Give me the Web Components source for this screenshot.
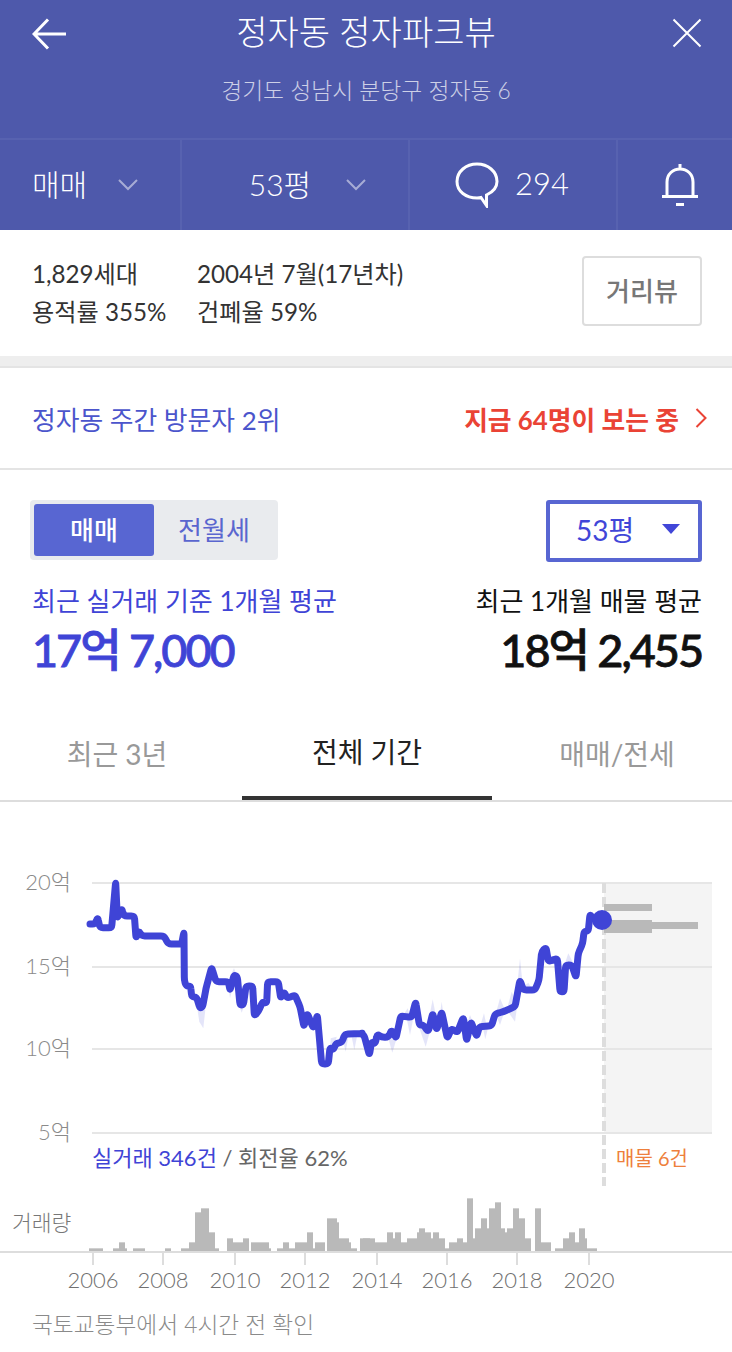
<!DOCTYPE html>
<html lang="ko">
<head>
<meta charset="utf-8">
<title>정자파크뷰</title>
<style>
html, body { margin: 0; background: #fff; }
body { width: 732px; font-family: Lato, "Noto Sans CJK KR", sans-serif; }
</style>
</head>
<body>
<apt-header></apt-header>
<apt-info></apt-info>
<apt-rank></apt-rank>
<apt-price></apt-price>
<apt-tabs></apt-tabs>
<apt-chart></apt-chart>

<script>
class AptHeader extends HTMLElement
{
    connectedCallback()
    {
        let root = this.attachShadow({mode: "open"});
        root.innerHTML =
        `<style>
        :host { display: block; height: 230px; background: #4e59ab; color: #fff; }
        .top { height: 138px; display: grid; grid-template-columns: 90px 1fr 90px; }
        .top svg { display: block; }
        .back { padding: 18px 0 0 32px; }
        .close { padding: 18px 0 0 30px; }
        .titles { text-align: center; }
        h1 { margin: 10px 0 0; font-size: 34px; line-height: 44px; font-weight: 300; white-space: nowrap; }
        p { margin: 20px 0 0; font-size: 22.800px; line-height: 32px; font-weight: 300; color: rgba(255,255,255,.72); white-space: nowrap; }
        .bar { border-top: 2px solid #5762b0; box-sizing: border-box; height: 92px; display: grid; grid-template-columns: 180px 228px 208px 1fr; }
        .cell { display: flex; align-items: center; justify-content: center; border-left: 2px solid #5762b0; font-size: 30px; font-weight: 300; padding-bottom: 4px; box-sizing: border-box; }
        .cell:first-child { border-left: 0; }
        .first { justify-content: flex-start; padding-left: 32px; }
        .chev { margin-left: 31px; margin-top: 4px; }
        .cnt { margin-left: 16px; font-size: 31px; }
        </style>
        <div class="top">
            <div class="back"><svg width="36" height="32" viewBox="0 0 36 32" fill="none" stroke="#fff" stroke-width="3"><path d="M34 16H2M16 1.500L2 16l14 14.500"/></svg></div>
            <div class="titles"><h1>정자동 정자파크뷰</h1><p>경기도 성남시 분당구 정자동 6</p></div>
            <div class="close"><svg width="30" height="30" viewBox="0 0 30 30" fill="none" stroke="#fff" stroke-width="2"><path d="M1.500 1.500L28.500 28.500M28.500 1.500L1.500 28.500"/></svg></div>
        </div>
        <div class="bar">
            <div class="cell first">매매<svg class="chev" width="20" height="12" viewBox="0 0 20 12" fill="none" stroke="#a7acd5" stroke-width="2"><path d="M1 1l9 9 9-9"/></svg></div>
            <div class="cell"><span style="margin-left:25px">53평</span><svg class="chev" style="margin-left:35px" width="20" height="12" viewBox="0 0 20 12" fill="none" stroke="#a7acd5" stroke-width="2"><path d="M1 1l9 9 9-9"/></svg></div>
            <div class="cell"><svg width="44" height="46" viewBox="0 0 44 46" fill="none" stroke="#fff" stroke-width="3" style="margin:4px 0 0 -2px"><path d="M22 2C11 2 2 9.500 2 19.500S11 36 22 36c1.500 0 2.500 0 4-.5l5.500 8V33C38 30 42 25.500 42 19.500 42 9.500 33 2 22 2z"/></svg><span class="cnt">294</span></div>
            <div class="cell"><svg width="36" height="42" viewBox="0 0 36 42" fill="none" stroke="#fff" stroke-width="3" style="margin:4px 0 0 10px"><path d="M18 0v4M5 31V18C5 10 11 5 18 5s13 5 13 13v13M0 32.500h36"/><path d="M14 40.500h8" stroke-width="3"/></svg></div>
        </div>`;
    }
}
customElements.define("apt-header", AptHeader);

class AptInfo extends HTMLElement
{
    connectedCallback()
    {
        let root = this.attachShadow({mode: "open"});
        root.innerHTML =
        `<style>
        :host { display: flex; align-items: center; height: 136px; padding: 0 30px 0 32px; box-sizing: border-box; border-bottom: 10px solid #eee; font-size: 24.200px; color: #333; line-height: 38px; }
        .col { white-space: nowrap; }
        .a { width: 165px; }
        button { margin-left: auto; width: 120px; height: 70px; margin-top: -4px; border: 2px solid #ddd; border-radius: 4px; background: #fff; font: inherit; font-size: 26px; font-weight: 500; color: #777; padding: 0; }
        </style>
        <div class="col a">1,829세대<br>용적률 355%</div>
        <div class="col">2004년 7월(17년차)<br>건폐율 59%</div>
        <button>거리뷰</button>`;
    }
}
customElements.define("apt-info", AptInfo);

class AptRank extends HTMLElement
{
    connectedCallback()
    {
        let root = this.attachShadow({mode: "open"});
        root.innerHTML =
        `<style>
        :host { display: flex; align-items: center; justify-content: space-between; height: 104px; padding: 0 25px 0 32px; box-sizing: border-box; border-top: 2px solid #e4e4e4; border-bottom: 2px solid #e4e4e4; font-size: 25.800px; }
        .rank { color: #4b55cc; }
        .now { display: flex; align-items: center; gap: 16px; color: #ea4335; font-weight: 700; }
        </style>
        <span class="rank">정자동 주간 방문자 2위</span>
        <span class="now">지금 64명이 보는 중<svg width="12" height="20" viewBox="0 0 12 20" fill="none" stroke="#ea4335" stroke-width="2"><path d="M1.500 1l9 9-9 9"/></svg></span>`;
    }
}
customElements.define("apt-rank", AptRank);

class AptPrice extends HTMLElement
{
    connectedCallback()
    {
        let root = this.attachShadow({mode: "open"});
        root.innerHTML =
        `<style>
        :host { display: block; padding: 30px 30px 0 30px; }
        .row { display: flex; justify-content: space-between; align-items: flex-start; }
        .seg { display: flex; width: 248px; height: 60px; padding: 4px; box-sizing: border-box; background: #e9ebee; border-radius: 4px; font-size: 26px; }
        .seg span { flex: 1; display: flex; align-items: center; justify-content: center; padding-bottom: 4px; box-sizing: border-box; color: #5a66cf; }
        .seg .on { flex: 0 0 120px; background: #5866d2; border-radius: 3px; color: #fff; font-weight: 500; }
        .pick { display: flex; align-items: center; justify-content: space-between; width: 156px; height: 62px; box-sizing: border-box; padding: 0 18px 5px 26px; border: 4px solid #5866d2; border-radius: 3px; font-size: 28px; color: #4146d8; }
        .pick i { width: 0; height: 0; border: 9px solid transparent; border-top: 10px solid #4146d8; border-bottom: 0; }
        .nums { margin-top: 20px; padding: 0 0 0 2px; }
        .lbl { font-size: 26px; line-height: 38px; }
        .val { font-size: 45px; line-height: 60px; font-weight: 500; letter-spacing: -2px; -webkit-text-stroke: .8px currentColor; margin-top: 0; }
        .blue { color: #3f44d6; }
        .right { text-align: right; color: #111; }
        </style>
        <div class="row">
            <div class="seg"><span class="on">매매</span><span>전월세</span></div>
            <div class="pick">53평<i></i></div>
        </div>
        <div class="row nums">
            <div class="blue"><div class="lbl">최근 실거래 기준 1개월 평균</div><div class="val">17억 7,000</div></div>
            <div class="right"><div class="lbl">최근 1개월 매물 평균</div><div class="val">18억 2,455</div></div>
        </div>`;
    }
}
customElements.define("apt-price", AptPrice);

class AptTabs extends HTMLElement
{
    connectedCallback()
    {
        let root = this.attachShadow({mode: "open"});
        root.innerHTML =
        `<style>
        :host { display: grid; grid-template-columns: 242px 250px 1fr; height: 122px; box-sizing: border-box; border-bottom: 2px solid #ddd; font-size: 28px; color: #999; text-align: center; }
        div { display: flex; align-items: center; justify-content: center; height: 120px; box-sizing: border-box; padding-top: 26px; }
        .a { padding-right: 8px; }
        .c { padding-left: 10px; }
        .on { color: #222; border-bottom: 4px solid #333; }
        </style>
        <div class="a">최근 3년</div><div class="on">전체 기간</div><div class="c">매매/전세</div>`;
    }
}
customElements.define("apt-tabs", AptTabs);

// zoom-read coordinates, x/3 + origin
const LINE_A = [[270,192],[285,192],[293,172],[300,203],[335,203],[347,65],[352,175],[365,145],[372,168],[403,168],[408,235],[417,212],[425,228],[492,228],[505,252],[545,252],[552,215],[553,360],[558,378],[572,378],[575,410],[590,412],[600,445],[608,440],[618,385],[635,322],[648,365],[685,365],[690,392],[702,345],[712,350],[720,435],[730,435],[738,378],[758,378],[763,468],[775,455],[788,425],[800,430],[803,365],[835,365],[842,415],[852,395],[862,415],[885,405],[900,440],[912,500],[922,460],[940,505],[952,465],[965,612],[985,612],[990,562],[1000,570],[1008,550],[1025,548],[1035,522],[1090,520]];
const LINE_B = [[0,520],[12,525],[28,585],[35,545],[45,552],[52,522],[65,532],[85,532],[95,510],[108,535],[122,468],[155,472],[167,425],[178,495],[190,495],[205,515],[218,460],[230,510],[245,455],[262,535],[275,505],[292,518],[310,472],[320,542],[333,485],[350,530],[358,500],[395,497],[405,462],[430,455],[465,440],[480,360],[490,390],[525,390],[537,360],[545,275],[558,262],[565,305],[592,295],[600,395],[612,395],[617,315],[635,315],[648,352],[655,280],[668,250],[672,215],[685,213],[690,162],[700,178],[725,180]];
// pale spikes of the monthly spread behind the line
const BAND_A = [[[592,445],[598,485],[610,505],[616,450]],[[625,360],[635,308],[645,350]],[[685,375],[690,415],[700,375]],[[695,340],[702,325],[710,345]],[[715,430],[725,458],[735,430]],[[990,575],[992,535],[1010,530],[1000,570]],[[1030,545],[1037,575],[1045,530]],[[1055,530],[1063,570],[1072,525]]];
const BAND_B = [[[85,535],[97,578],[110,535]],[[130,465],[143,445],[150,470]],[[140,475],[150,525],[160,475]],[[175,495],[197,560],[215,495]],[[208,470],[218,418],[228,470]],[[240,460],[245,425],[250,460]],[[325,480],[330,465],[340,490]],[[360,500],[372,460],[380,500]],[[368,500],[376,538],[385,500]],[[405,470],[420,415],[435,450]],[[410,470],[420,495],[430,465]],[[440,450],[465,485],[472,435],[455,395]],[[472,375],[480,295],[488,375]],[[490,380],[505,368],[515,385]],[[615,310],[625,280],[640,310]]];
const BARS_A = [[267,309,325],[339,357,325],[357,375,307],[375,381,325],[399,435,325],[495,513,325],[543,567,325],[567,585,307],[585,603,217],[603,627,205],[627,645,277],[645,657,325],[681,699,295],[699,729,307],[729,747,295],[753,807,307],[807,813,325],[831,849,325],[849,867,307],[867,885,325],[885,921,307],[921,939,277],[939,945,325],[945,975,307],[981,1011,235],[1011,1017,247],[1017,1047,295],[1047,1053,307],[1053,1071,325],[1089,1110,295]];
const BARS_B = [[0,45,295],[45,81,307],[81,99,277],[99,105,295],[105,123,277],[123,141,307],[141,171,295],[171,177,277],[177,195,265],[195,213,277],[213,219,295],[219,237,277],[237,255,295],[255,267,325],[267,291,307],[291,309,295],[309,321,307],[321,339,175],[339,345,295],[345,363,265],[363,381,235],[381,387,265],[387,405,205],[405,423,187],[423,435,265],[435,441,277],[441,459,265],[459,477,205],[477,495,235],[495,513,295],[525,543,205],[543,573,307],[585,609,325],[609,627,295],[627,645,277],[645,657,307],[657,675,265],[675,681,295],[681,711,325]];
const OFFSET_Y = 802;

// polyline with its corners rounded off, the real chart is a curve
function roundedPath(line, radius)
{
    let d = "M" + line[0][0].toFixed(1) + " " + line[0][1].toFixed(1);
    for(let i=1; i<line.length-1; i++)
    {
        let p = line[i];
        let cut = q =>
        {
            let dx = q[0]-p[0];
            let dy = q[1]-p[1];
            let len = Math.hypot(dx, dy) || 1;
            let r = Math.min(radius, len/2);
            return (p[0]+dx/len*r).toFixed(1) + " " + (p[1]+dy/len*r).toFixed(1);
        };
        d += "L" + cut(line[i-1]) + "Q" + p[0].toFixed(1) + " " + p[1].toFixed(1) + " " + cut(line[i+1]);
    }
    let end = line[line.length-1];
    return d + "L" + end[0].toFixed(1) + " " + end[1].toFixed(1);
}

class AptChart extends HTMLElement
{
    connectedCallback()
    {
        let root = this.attachShadow({mode: "open"});

        let toA = p => [p[0]/3, 860 + p[1]/3 - OFFSET_Y];
        let toB = p => [360 + p[0]/3, 860 + p[1]/3 - OFFSET_Y];
        let line = LINE_A.map(toA).concat(LINE_B.map(toB));
        let pts = l => l.map(p => p[0].toFixed(1) + "," + p[1].toFixed(1)).join(" ");

        let band = "";
        for(let b of BAND_A)
        {
            band += `<polygon points="${pts(b.map(toA))}"/>`;
        }
        for(let b of BAND_B)
        {
            band += `<polygon points="${pts(b.map(toB))}"/>`;
        }

        let base = 1251 - OFFSET_Y;
        let bars = "";
        let addBars = (list, x0) =>
        {
            for(let b of list)
            {
                let top = 1140 + b[2]/3 - OFFSET_Y;
                bars += `<rect x="${x0 + b[0]/3}" y="${top}" width="${(b[1]-b[0])/3}" height="${base - top}"/>`;
            }
        };
        addBars(BARS_A, 0);
        addBars(BARS_B, 360);

        let grid = "";
        for(let [y, t] of [[883,"20억"],[967,"15억"],[1049,"10억"],[1133,"5억"]])
        {
            grid += `<rect x="92" y="${y-1-OFFSET_Y}" width="620" height="2" fill="#e6e6e6"/>`;
            grid += `<text class="axis" x="71" y="${y+7-OFFSET_Y}" text-anchor="end">${t}</text>`;
        }

        let years = "";
        for(let [x, t] of [[93,2006],[163,2008],[235,2010],[305,2012],[377,2014],[447,2016],[517,2018],[589,2020]])
        {
            years += `<rect x="${x-1}" y="${1253-OFFSET_Y}" width="2" height="12" fill="#ddd"/>`;
            years += `<text class="year" x="${x}" y="${1288-OFFSET_Y}" text-anchor="middle">${t}</text>`;
        }

        root.innerHTML =
        `<style>
        :host { display: block; }
        svg { display: block; }
        text { font-family: Lato, "Noto Sans CJK KR", sans-serif; }
        .axis { font-size: 22px; font-weight: 300; fill: #8a8a8a; }
        .year { font-size: 22px; font-weight: 300; fill: #707070; }
        .small { font-size: 22px; fill: #666; }
        p { margin: 0; padding: 0 0 0 32px; font-weight: 300; font-size: 22.700px; line-height: 32px; color: #8a8a8a; }
        </style>
        <svg width="732" height="507" viewBox="0 0 732 507">
            <rect x="604" y="${883-OFFSET_Y}" width="108" height="249" fill="#f4f4f4"/>
            ${grid}
            <line x1="604" x2="604" y1="${883-OFFSET_Y}" y2="${1186-OFFSET_Y}" stroke="#ddd" stroke-width="4" stroke-dasharray="10 4"/>
            <g fill="#b9b9b9">
                <rect x="604" y="${904-OFFSET_Y}" width="48" height="7"/>
                <rect x="604" y="${920-OFFSET_Y}" width="48" height="13"/>
                <rect x="652" y="${922-OFFSET_Y}" width="46" height="7"/>
            </g>
            <g fill="#3f44d6" fill-opacity=".14">${band}</g>
            <path d="${roundedPath(line, 3)}" fill="none" stroke="#3f44d6" stroke-width="7" stroke-linejoin="round" stroke-linecap="round"/>
            <circle cx="602" cy="${920-OFFSET_Y}" r="10" fill="#3f44d6"/>
            <text class="small" x="92" y="${1166-OFFSET_Y}"><tspan fill="#3f44d6">실거래 346건</tspan> / 회전율 62%</text>
            <text class="small" x="616" y="${1166-OFFSET_Y}" style="fill:#ee7f3c;font-size:20px">매물 6건</text>
            <text class="axis" x="12" y="${1231-OFFSET_Y}" style="fill:#777;font-size:21.500px">거래량</text>
            <g fill="#b9b9b9">${bars}</g>
            <rect x="0" y="${1251-OFFSET_Y}" width="732" height="2" fill="#ddd"/>
            ${years}
        </svg>
        <p>국토교통부에서 4시간 전 확인</p>`;
    }
}
customElements.define("apt-chart", AptChart);
</script>
</body>
</html>
